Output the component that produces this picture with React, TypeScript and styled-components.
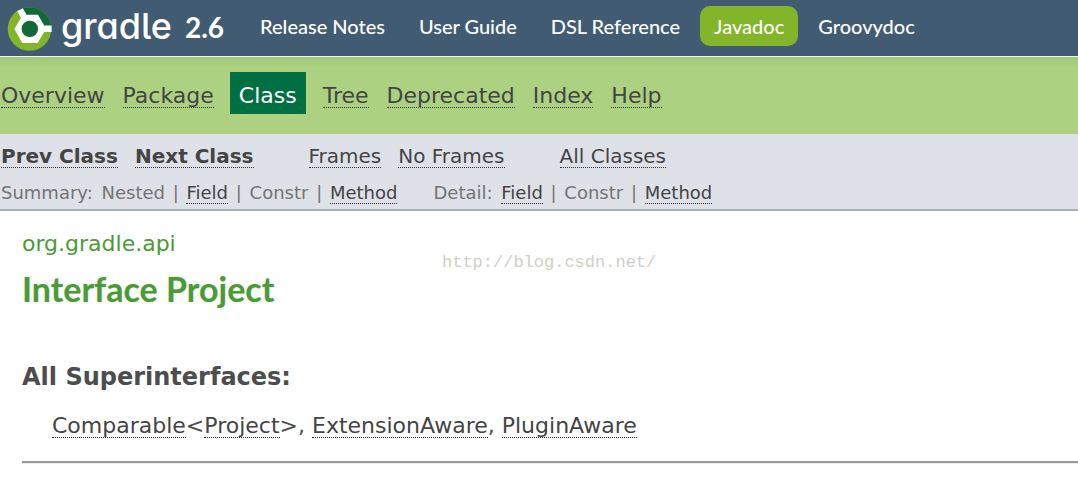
import React from "react";
import styled, { createGlobalStyle } from "styled-components";

const GlobalStyle = createGlobalStyle`
  body {
    margin: 0;
    background: #fff;
    color: #4d4d4d;
    font-family: Verdana, "DejaVu Sans", sans-serif;
    font-size: 22px;
  }
`;

const SiteHeader = styled.header`
  display: flex;
  align-items: center;
  height: 56px;
  padding-left: 7px;
  background: #415c72;
  border-bottom: 1px solid #f4f6f0;
  font-family: Lato, sans-serif;
  color: #fff;
`;

const Brand = styled.a`
  display: flex;
  align-items: center;
  color: #fff;
  text-decoration: none;
`;

const Wordmark = styled.span`
  margin-left: 9px;
  padding-bottom: 4px;
  font: 500 36px/48px Inter, sans-serif;
  font-feature-settings: "cv11", "cv05";
`;

const Version = styled.span`
  margin-left: 13px;
  padding-bottom: 2px;
  font-size: 28px;
  line-height: 32px;
  font-weight: 700;
`;

const SiteNav = styled.nav`
  display: flex;
  align-items: center;
  gap: 6px;
  margin: 0 0 4px 22px;
`;

const SiteLink = styled.a<{ $active?: boolean }>`
  padding: 0 14px;
  border-radius: 10px;
  background: ${(p) => (p.$active ? "#83b52b" : "transparent")};
  color: #fff;
  font-size: 20px;
  font-weight: 500;
  line-height: 40px;
  text-decoration: none;
  white-space: nowrap;
`;

const TopBar = styled.nav`
  display: flex;
  align-items: baseline;
  gap: 18px;
  height: 77px;
  padding: 15px 0 0 1px;
  box-sizing: border-box;
  background: linear-gradient(#a0c677, #acd180 10px);
  white-space: nowrap;
`;

const DocLink = styled.a<{ $bold?: boolean }>`
  color: #444;
  border-bottom: 1px dotted #333;
  font-weight: ${(p) => (p.$bold ? 700 : 400)};
  line-height: 1;
  text-decoration: none;
`;

const SubLink = styled(DocLink)`
  display: inline-block;
  padding-bottom: 1px;
`;

const InlineLink = styled(DocLink)`
  display: inline-block;
`;

const CurrentPage = styled.span`
  margin: 0 -1px 0 -2px;
  padding: 11px 9px 5px;
  background: #007042;
  color: #fff;
  line-height: 26px;
`;

const SubBar = styled.div`
  padding: 12px 0 5px 1px;
  background: #dee1e8;
  border-bottom: 2px solid #a4b1c3;
  white-space: nowrap;
`;

const SubRow = styled.nav`
  display: flex;
  gap: 55px;
  font-size: 20px;
  line-height: 20px;
`;

const LinkPair = styled.div`
  display: flex;
  gap: 17px;
`;

const DetailRow = styled.div`
  display: flex;
  gap: 36px;
  margin-top: 15px;
  color: #747474;
  font-size: 18px;
  line-height: 20px;
`;

const RowLabel = styled.span`
  margin-right: 3px;
`;

const Separator = styled.span`
  margin: 0 2px;
`;

const Main = styled.main`
  position: relative;
  padding: 19px 0 0 22px;
`;

const PackageName = styled.div`
  color: #4a9b34;
  line-height: 28px;
`;

const Title = styled.h1`
  margin: 11px 0 0;
  color: #4a9b34;
  font: 700 34px/40px Lato, sans-serif;
  text-shadow: 0 0 3px #ddd;
`;

const SectionTitle = styled.h2`
  margin: 54px 0 0;
  color: #4d4d4d;
  font-size: 24px;
  line-height: 28px;
`;

const Interfaces = styled.p`
  margin: 23px 0 0 30px;
  line-height: 24px;
`;

const Rule = styled.hr`
  height: 2px;
  margin: 23px 0 0;
  border: 0;
  border-bottom: 1px solid #eee;
  background: #999;
`;

const Watermark = styled.span`
  position: absolute;
  top: 38px;
  left: 442px;
  color: #d0d0c8;
  font: 17px/28px "Liberation Mono", monospace;
`;

const Logo = () => (
  <svg width="45" height="46" viewBox="0 0 45 46" aria-hidden="true">
    <circle cx="22.5" cy="24" r="21.8" fill="#83b52b" />
    <path d="M22.5 24 12 4.9A21.8 21.8 0 0 1 44.3 24Z" fill="#136936" />
    <path
      d="M10.2 6.3 15.8 3.2 19.6 9.8H31L37.2 20.6H44.6V27H37.2L30.6 38H15.2L7.4 24 14 12.8Z"
      fill="#fff"
    />
    <circle cx="22.8" cy="23.9" r="8.2" fill="#136936" />
  </svg>
);

export default function App() {
  return (
    <>
      <GlobalStyle />
      <SiteHeader>
        <Brand href="#home">
          <Logo />
          <Wordmark>gradle</Wordmark>
          <Version>2.6</Version>
        </Brand>
        <SiteNav>
          <SiteLink href="#release-notes">Release Notes</SiteLink>
          <SiteLink href="#user-guide">User Guide</SiteLink>
          <SiteLink href="#dsl">DSL Reference</SiteLink>
          <SiteLink href="#javadoc" $active>Javadoc</SiteLink>
          <SiteLink href="#groovydoc">Groovydoc</SiteLink>
        </SiteNav>
      </SiteHeader>
      <TopBar>
        <DocLink href="#overview">Overview</DocLink>
        <DocLink href="#package">Package</DocLink>
        <CurrentPage>Class</CurrentPage>
        <DocLink href="#tree">Tree</DocLink>
        <DocLink href="#deprecated">Deprecated</DocLink>
        <DocLink href="#index">Index</DocLink>
        <DocLink href="#help">Help</DocLink>
      </TopBar>
      <SubBar>
        <SubRow>
          <LinkPair>
            <SubLink $bold href="#prev">Prev Class</SubLink>
            <SubLink $bold href="#next">Next Class</SubLink>
          </LinkPair>
          <LinkPair>
            <SubLink href="#frames">Frames</SubLink>
            <SubLink href="#no-frames">No Frames</SubLink>
          </LinkPair>
          <SubLink href="#all-classes">All Classes</SubLink>
        </SubRow>
        <DetailRow>
          <div>
            <RowLabel>Summary:</RowLabel> Nested <Separator>|</Separator>{" "}
            <SubLink href="#fields">Field</SubLink> <Separator>|</Separator> Constr{" "}
            <Separator>|</Separator> <SubLink href="#methods">Method</SubLink>
          </div>
          <div>
            <RowLabel>Detail:</RowLabel> <SubLink href="#field-detail">Field</SubLink>{" "}
            <Separator>|</Separator> Constr <Separator>|</Separator>{" "}
            <SubLink href="#method-detail">Method</SubLink>
          </div>
        </DetailRow>
      </SubBar>
      <Main>
        <PackageName>org.gradle.api</PackageName>
        <Title>Interface Project</Title>
        <Watermark>http://blog.csdn.net/</Watermark>
        <SectionTitle>All Superinterfaces:</SectionTitle>
        <Interfaces>
          <InlineLink href="#comparable">Comparable</InlineLink>&lt;
          <InlineLink href="#project">Project</InlineLink>&gt;,{" "}
          <InlineLink href="#extension-aware">ExtensionAware</InlineLink>,{" "}
          <InlineLink href="#plugin-aware">PluginAware</InlineLink>
        </Interfaces>
        <Rule />
      </Main>
    </>
  );
}
